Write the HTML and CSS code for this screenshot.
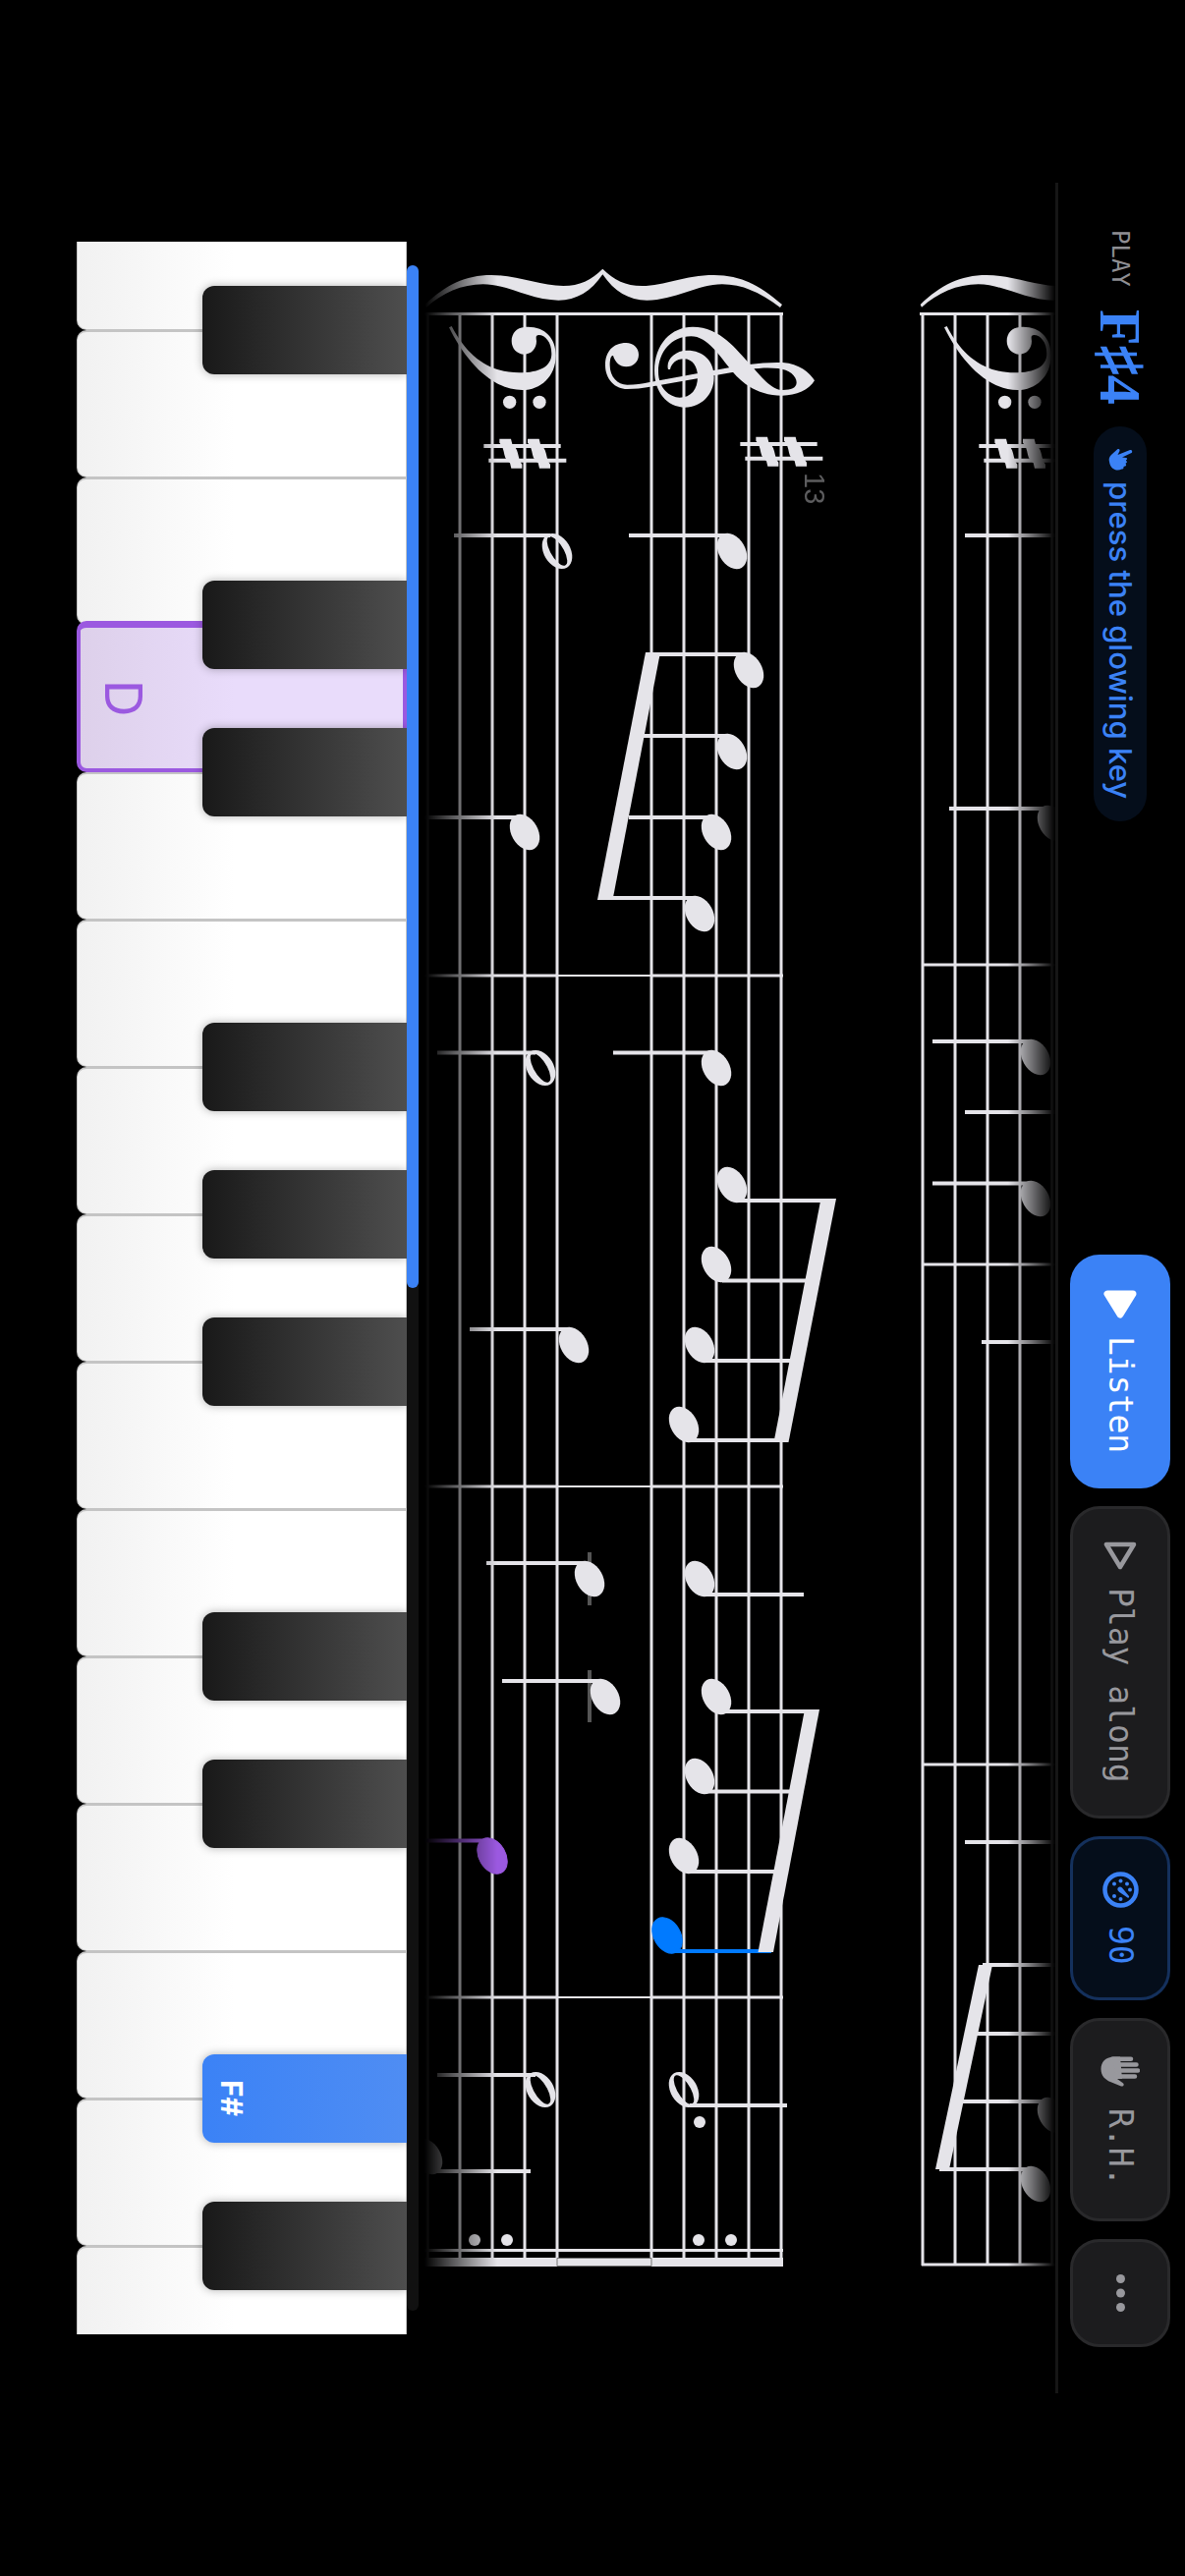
FILE: index.html
```html
<!DOCTYPE html>
<html lang="en">
<head>
    <meta charset="UTF-8">
    <meta name="viewport" content="width=device-width, initial-scale=1.0">
    <title>Piano practice</title>
    <link rel="stylesheet" href="styles.css">
</head>
<body>
<div class="app">
    <header class="toolbar">
        <span class="mode">PLAY</span>
        <span class="note-name">F♯4</span>
        <span class="hint">
            <svg width="25" height="24" viewBox="0 0 25 24" fill="currentColor">
                <path d="M1 14C0 10 2 8 4 6L9 1.5C10 .5 12 1 11.500 3L9.500 7L22 2C24 1.500 25 4 23.500 5L14 9.500L18 10C19.500 10 19.500 12 18 12.200L18 13C19.500 13.500 19 15.300 18 15.300L17.500 16C18.700 17 18 18.500 17 18.500L15.500 19C16 21 14.500 21.500 13.500 21.500C9 24 2 22 1 14Z"/>
            </svg>
            press the glowing key
        </span>

        <div class="controls">
            <button class="btn btn-primary" type="button">
                <svg width="34" height="29" viewBox="0 0 34 29">
                    <path d="M4 4H30L17 25Z" fill="currentColor" stroke="currentColor" stroke-width="7" stroke-linejoin="round"/>
                </svg>
                Listen
            </button>
            <button class="btn" type="button">
                <svg width="34" height="29" viewBox="0 0 34 29">
                    <path d="M3 3H31L17 26Z" fill="none" stroke="currentColor" stroke-width="4.500" stroke-linejoin="round"/>
                </svg>
                Play along
            </button>
            <button class="btn btn-tempo" type="button">
                <svg width="37" height="37" viewBox="0 0 37 37" fill="currentColor">
                    <circle cx="18.500" cy="18.500" r="16" fill="none" stroke="currentColor" stroke-width="4.500"/>
                    <circle cx="12" cy="12.500" r="2"/>
                    <circle cx="18.500" cy="9.500" r="2"/>
                    <circle cx="25" cy="12.500" r="2"/>
                    <circle cx="28" cy="18.500" r="2"/>
                    <circle cx="12" cy="25" r="2"/>
                    <circle cx="18.500" cy="28" r="2"/>
                    <path d="M15.500 19C14.500 16 18 14.500 20 16.500L27 25C27.500 26.500 26.500 27 25.500 26.500L17 20.800Z"/>
                </svg>
                90
            </button>
            <button class="btn" type="button">
                <svg width="40" height="38" viewBox="0 -3 40 38" fill="currentColor" stroke="currentColor" stroke-linecap="round">
                    <path d="M20 .5H13C5 1 .5 6 .5 13C.5 20 5 24 10 26L21 30.500C24 31 24.500 28 22.500 27L17 23H22Z" stroke="none"/>
                    <path d="M12 2.700H31M15 8.500H36.500M15 14.500H38M15 20.500H35" stroke-width="4.500" fill="none"/>
                </svg>
                R.H.
            </button>
            <button class="btn" type="button" aria-label="More">
                <svg width="9" height="38" viewBox="0 0 9 38" fill="currentColor">
                    <circle cx="4.500" cy="4.500" r="4.500"/>
                    <circle cx="4.500" cy="19" r="4.500"/>
                    <circle cx="4.500" cy="33.500" r="4.500"/>
                </svg>
            </button>
        </div>
    </header>

    <main class="score">
        <svg class="sheet" viewBox="426 186 648 2250" role="img" aria-label="Sheet music">
            <defs>
                <ellipse id="head" rx="19.500" ry="13.500" transform="rotate(60)"/>
                <path id="half" fill-rule="evenodd" d="M-19.500 0a19.500 13.500 0 1 0 39 0a19.500 13.500 0 1 0-39 0ZM-16.500-1a16.500 6.500 0 1 0 33 2a16.500 6.500 0 1 0-33-2Z" transform="rotate(59)"/>
                <g id="sharp">
                    <path d="M217 606H452V618H217ZM232 650H469V662H232Z"/>
                    <path d="M265 590H300L304 606C312 614 318 620 321 634C324 646 326 660 334 668V680H301L297 664C287 656 283 650 280 638C277 624 275 612 265 602Z"/>
                    <path d="M351 590H386L390 606C398 614 404 620 407 634C410 646 412 660 420 668V680H387L383 664C373 656 369 650 366 638C363 624 361 612 351 602Z"/>
                </g>
                <!-- brace, bass clef and key signature, shared by both systems -->
                <g id="bass-start" transform="translate(420 250) scale(.33333)">
                    <path d="M1128 180C1060 120 1000 90 920 90C830 90 770 123 700 123C650 123 615 105 580 71C545 105 510 123 460 123C390 123 320 90 240 90C160 90 100 120 38 180L42 188C90 145 150 118 215 118C290 118 360 167 445 167C500 167 545 140 580 88C615 140 660 167 715 167C800 167 870 118 945 118C1010 118 1070 148 1122 189Z"/>
                    <path d="M341 249C400 244 437 280 437 335C437 400 390 441 335 441C240 441 160 350 111 250L119 246C170 345 240 388 325 388C390 388 424 368 424 330C424 295 405 273 385 273C376 273 376 278 378 292C378 315 362 332 341 332C318 332 302 314 302 291C302 268 318 250 341 249Z"/>
                    <circle cx="296" cy="478" r="20"/>
                    <circle cx="387" cy="478" r="20"/>
                    <use href="#sharp"/>
                </g>
            </defs>

            <g class="lines">
                <path d="M435 320V2306M468 320V2298M501 320V2298M534 320V2298M567 320V2298"/>
                <path d="M663 320V2298M696 320V2298M729 320V2298M762 320V2298M795 320V2306"/>
                <path d="M939 320V2306M972 320V2306M1005 320V2306M1038 320V2306M1071 320V2306"/>
                <path d="M432 319.500H797M432 993H567M663 993H797M432 1513H567M663 1513H797M432 2033H567M663 2033H797M432 2290.500H797"/>
                <path d="M936 319.500H1074M938 982H1074M938 1287H1074M938 1796H1074M938 2305H1074"/>
                <path class="thin" d="M567 993H663M567 1513H663M567 2033H663"/>
            </g>

            <g class="ink">
                <path d="M432 2298H797V2307H432Z"/>
                <path d="M567 2298.500H663V2306.500H567Z" stroke="#777" stroke-width="1"/>
                <use href="#bass-start"/>
                <use href="#bass-start" x="504"/>
                <g transform="translate(420 250) scale(.33333)">
                    <path d="M652 297C610 297 588 325 588 365C588 408 618 438 655 438C680 438 700 435 720 432L980 386C1040 374 1080 371 1115 375C1150 378 1172 398 1172 418C1172 435 1155 441 1130 441C1095 441 1065 400 1030 362C990 320 940 248 855 248C790 248 738 300 738 382C738 445 775 494 832 494C880 494 920 455 920 402C920 352 888 320 838 320C800 320 772 350 780 378L786 378C790 360 805 346 828 346C855 346 870 370 870 400C870 440 850 464 815 464C785 464 750 435 750 385C750 325 790 277 850 277C900 277 935 335 975 383C1015 430 1060 458 1128 458C1170 458 1212 440 1227 412C1212 388 1180 360 1130 357C1080 355 1020 362 965 373L720 418C700 422 680 425 655 425C625 425 602 400 602 365C602 345 606 334 612 336C618 356 632 370 652 370C674 370 690 354 690 333C690 312 674 297 652 297Z"/>
                    <use href="#sharp" x="783" y="-6"/>
                </g>

                <!-- treble beams -->
                <path d="M657 664H672L623.500 916H608Z"/>
                <path d="M835.500 1220H851L802.500 1468H787.500Z"/>
                <path d="M952 2208H966L1010 2000H996Z"/>

                <use href="#half" x="567" y="561"/>
                <use href="#head" x="745" y="561"/>
                <use href="#head" x="762" y="682"/>
                <use href="#head" x="745" y="765"/>
                <use href="#head" x="729" y="847"/>
                <use href="#head" x="712" y="930"/>
                <use href="#head" x="534" y="847"/>

                <use href="#half" x="550" y="1087"/>
                <use href="#head" x="729" y="1087"/>
                <use href="#head" x="745" y="1206"/>
                <use href="#head" x="729" y="1287"/>
                <use href="#head" x="712" y="1369"/>
                <use href="#head" x="696" y="1450"/>
                <use href="#head" x="584" y="1369"/>
            </g>

            <path class="ledger" d="M600 1580V1634M600 1700V1753"/>

            <g class="ink">
                <use href="#head" x="600" y="1607"/>
                <use href="#head" x="616" y="1727"/>
                <use href="#head" x="712" y="1607"/>
                <use href="#head" x="729" y="1727"/>
                <use href="#head" x="712" y="1808"/>
                <use href="#head" x="696" y="1889"/>

                <use href="#half" x="550" y="2127"/>
                <use href="#half" x="696" y="2127"/>
                <use href="#head" x="435" y="2195"/>
                <circle cx="712" cy="2160" r="6"/>
                <circle cx="483" cy="2280" r="6"/>
                <circle cx="516" cy="2280" r="6"/>
                <circle cx="711" cy="2280" r="6"/>
                <circle cx="744" cy="2280" r="6"/>

                <use href="#head" x="1071" y="838"/>
                <use href="#head" x="1054" y="1076"/>
                <use href="#head" x="1054" y="1220"/>
                <use href="#head" x="1071" y="2153"/>
                <use href="#head" x="1054" y="2223"/>
            </g>

            <g class="stems">
                <path d="M462 545H560M640 545H738M668 666H756M655 749H739M640 832H723M615 914H706M432 832H528"/>
                <path d="M445 1071.500H545M624 1071.500H723M750 1222H840M735 1303.500H824M718 1385H808M702 1466H796M478 1353H578"/>
                <path d="M495 1591H594M511 1711H610M718 1623H818M735 1742H826M718 1823.500H808M702 1905H792"/>
                <path d="M445 2112H545M702 2143H801M432 2210H540"/>
                <path d="M982 545H1074M966 823H1074M949 1060H1050M982 1132H1074M949 1204.500H1050M999 1366H1074M982 1875H1074M1000 2000H1074M988 2070H1074M974 2139H1065M956 2208H1050"/>
            </g>

            <g class="next-left">
                <use href="#head" x="501" y="1889"/>
                <path d="M432 1873.500H498"/>
            </g>
            <g class="next-right">
                <use href="#head" x="679" y="1970"/>
                <path d="M685 1986H785"/>
            </g>
            <path class="ink" d="M819 1740H834L787 1987H771.500Z"/>

            <text class="measure" transform="translate(819 481) rotate(90)">13</text>
        </svg>
    </main>

    <div class="progress" role="progressbar" aria-label="Song progress" aria-valuenow="50" aria-valuemin="0" aria-valuemax="100">
        <div class="progress-fill" style="height: 50%"></div>
    </div>

    <div class="keyboard">
        <div class="keys">
            <div class="slot"><button class="white" type="button" aria-label="A"></button><button class="black" type="button" aria-label="A sharp"></button></div>
            <div class="slot"><button class="white" type="button" aria-label="B"></button></div>
            <div class="slot"><button class="white" type="button" aria-label="C"></button><button class="black" type="button" aria-label="C sharp"></button></div>
            <div class="slot"><button class="white glow-left" type="button">D</button><button class="black" type="button" aria-label="D sharp"></button></div>
            <div class="slot"><button class="white" type="button" aria-label="E"></button></div>
            <div class="slot"><button class="white" type="button" aria-label="F"></button><button class="black" type="button" aria-label="F sharp"></button></div>
            <div class="slot"><button class="white" type="button" aria-label="G"></button><button class="black" type="button" aria-label="G sharp"></button></div>
            <div class="slot"><button class="white" type="button" aria-label="A"></button><button class="black" type="button" aria-label="A sharp"></button></div>
            <div class="slot"><button class="white" type="button" aria-label="B"></button></div>
            <div class="slot"><button class="white" type="button" aria-label="C"></button><button class="black" type="button" aria-label="C sharp"></button></div>
            <div class="slot"><button class="white" type="button" aria-label="D"></button><button class="black" type="button" aria-label="D sharp"></button></div>
            <div class="slot"><button class="white" type="button" aria-label="E"></button></div>
            <div class="slot"><button class="white" type="button" aria-label="F"></button><button class="black glow-right" type="button">F#</button></div>
            <div class="slot"><button class="white" type="button" aria-label="G"></button><button class="black" type="button" aria-label="G sharp"></button></div>
            <div class="slot"><button class="white" type="button" aria-label="A"></button></div>
        </div>
    </div>
</div>
</body>
</html>
```
FILE: styles.css
```css
* {
    box-sizing: border-box;
}
body {
    margin: 0;
    background-color: #000;
    font-family: Inter, sans-serif;
    color: #98989d;
}
/* The app is held in landscape: lines run top to bottom, blocks right to left */
.app {
    display: flex;
    flex-direction: column;
    width: 100%;
    height: 100vh;
    padding: 186px 0 186px 78px;
    writing-mode: vertical-rl;
    text-orientation: sideways;
}
button {
    margin: 0;
    font: inherit;
    color: inherit;
    writing-mode: inherit;
    text-orientation: inherit;
    cursor: pointer;
}
svg {
    display: block;
    flex: none;
}

/* Toolbar */
.toolbar {
    display: flex;
    align-items: center;
    gap: 23px;
    padding: 48px 15px 47px 12px;
    border-left: 3px solid #161616;
    white-space: nowrap;
}
.mode {
    font-family: "DejaVu Sans Mono", monospace;
    font-size: 24px;
    line-height: 36px;
    color: #8e8e93;
}
.note-name {
    font-family: "Liberation Serif", serif;
    font-size: 60px;
    font-weight: bold;
    line-height: 60px;
    color: #3b82f6;
}
.hint {
    display: flex;
    align-items: center;
    gap: 10px;
    padding: 22px 9px;
    border-radius: 27px;
    background-color: #050e1b;
    font-size: 31px;
    font-weight: 500;
    line-height: 36px;
    color: #3b82f6;
}
.controls {
    display: flex;
    gap: 18px;
    margin-top: auto;
}
.btn {
    display: flex;
    align-items: center;
    justify-content: center;
    gap: 18px;
    width: 102px;
    padding: 33px 0;
    border: 3px solid #29292b;
    border-radius: 30px;
    background-color: #1c1c1e;
    font-family: "DejaVu Sans Mono", monospace;
    font-size: 33px;
    line-height: 36px;
}
.btn-primary {
    border-color: #3b82f6;
    background-color: #3b82f6;
    color: #fff;
}
.btn-tempo {
    border-color: #14305c;
    background-color: #050e1b;
    color: #3b82f6;
}

/* Score */
.score {
    flex: 1;
    min-width: 0;
    -webkit-mask-image: linear-gradient(to right, transparent 6px, #000 80px, #000 calc(100% - 48px), transparent);
    mask-image: linear-gradient(to right, transparent 6px, #000 80px, #000 calc(100% - 48px), transparent);
}
.sheet {
    width: 100%;
    height: 100%;
    writing-mode: horizontal-tb;
}
.lines {
    fill: none;
    stroke: #e5e4e9;
    stroke-width: 3;
}
.lines .thin {
    stroke-width: 2;
}
.ink {
    fill: #e5e4e9;
}
.stems {
    fill: none;
    stroke: #e5e4e9;
    stroke-width: 4;
}
.ledger {
    stroke: #555;
    stroke-width: 4;
}
.next-left {
    fill: #9b59e0;
    stroke: #9b59e0;
}
.next-right {
    fill: #007aff;
    stroke: #007aff;
}
.next-left path,
.next-right path {
    stroke-width: 4;
}
.measure {
    font-family: "Liberation Sans", sans-serif;
    font-size: 29px;
    fill: #5c5c5e;
}

/* Progress */
.progress {
    width: 12px;
    margin: 84px 0;
    border-radius: 6px;
    background-color: #111;
}
.progress-fill {
    width: 12px;
    border-radius: 6px;
    background-color: #3b82f6;
}

/* Keyboard */
.keyboard {
    width: 336px;
    margin: 60px 0;
    overflow: hidden;
}
.keys {
    display: flex;
    width: 336px;
    height: calc(100% + 120px);
    margin: -60px 0;
}
.slot {
    position: relative;
    display: flex;
    flex: 1;
    width: 336px;
}
.white {
    flex: 1;
    width: 336px;
    padding: 0 0 0 15px;
    border: 1px solid #c4c4c4;
    border-top-width: 2px;
    border-radius: 10px 0 0 10px;
    background: linear-gradient(to right, #f1f1f1, #fff 48%);
    display: flex;
    flex-direction: column;
    align-items: center;
    justify-content: flex-end;
}
.black {
    position: absolute;
    z-index: 1;
    right: 0;
    bottom: -30%;
    width: 208px;
    height: 60%;
    padding: 0 0 0 12px;
    border: 0;
    border-radius: 12px 0 0 12px;
    background: linear-gradient(to right, #191919, #4e4e4e);
    box-shadow: 0 0 10px rgba(0, 0, 0, 0.3);
    display: flex;
    flex-direction: column;
    align-items: center;
    justify-content: flex-end;
}
.glow-left {
    margin-top: -4px;
    border: 4px solid #9b59e0;
    border-top-width: 7px;
    background: linear-gradient(to right, #ddd0ea, #e9dcfb 48%);
    font-size: 52px;
    line-height: 56px;
    color: #9b59e0;
}
.glow-right {
    background: linear-gradient(to right, #3b82f6, #4f8df3);
    font-size: 30px;
    font-weight: bold;
    line-height: 36px;
    color: #fff;
}
```
